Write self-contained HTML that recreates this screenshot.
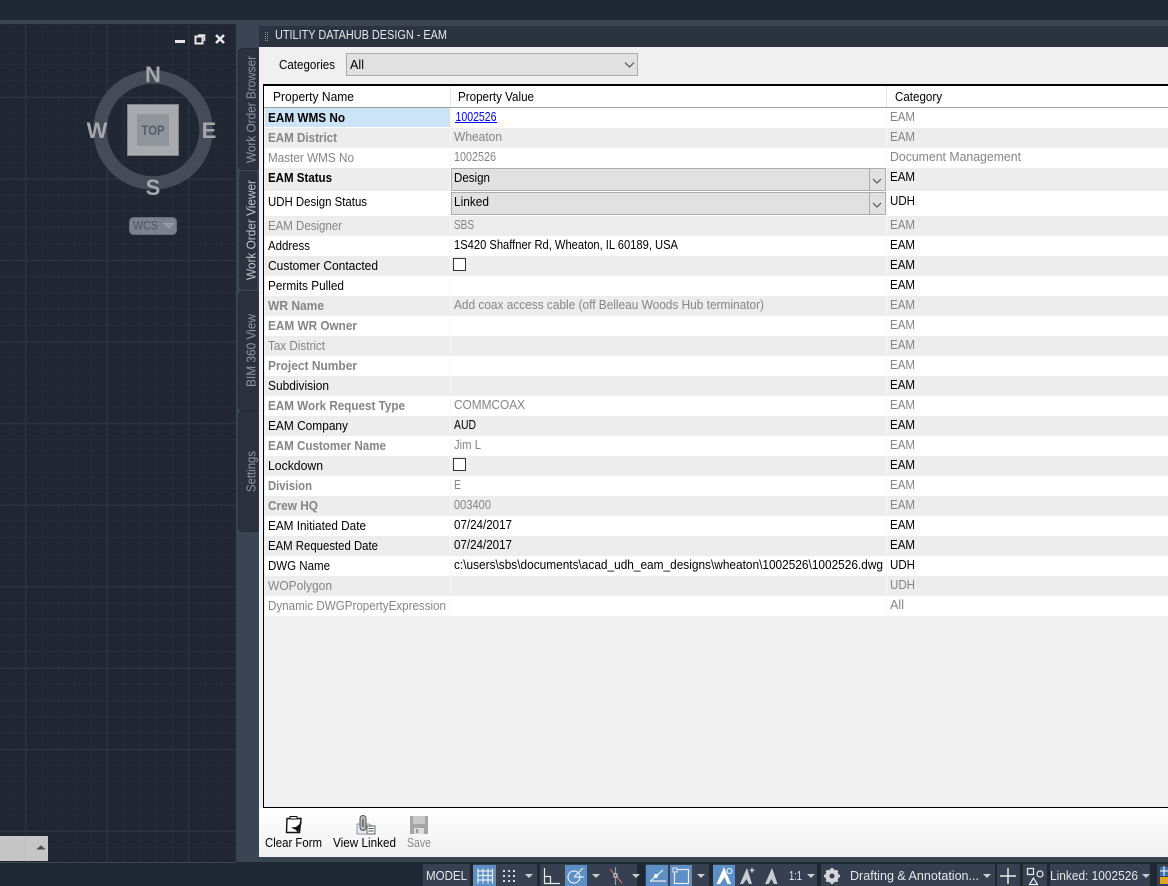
<!DOCTYPE html>
<html>
<head>
<meta charset="utf-8">
<style>
html,body{margin:0;padding:0;background:#1f2733;overflow:hidden}
svg{display:block;font-family:"Liberation Sans",sans-serif;font-size:12.5px}
.b{font-weight:bold}
.g{fill:#858585}
.k{fill:#000}
.s{fill:#e6e8eb;font-size:12.5px}
.i{fill:none;stroke:#e8eaee;stroke-width:1.2}
.t{fill:#c9ccd1}
</style>
</head>
<body>
<svg width="1168" height="886" viewBox="0 0 1168 886" xmlns="http://www.w3.org/2000/svg">
<defs>
<pattern id="minor" x="9" y="15" width="16.31" height="16.31" patternUnits="userSpaceOnUse">
<path d="M0.5 0V16.31M0 .5H16.31" stroke="#262c38" stroke-width="1" fill="none"/>
</pattern>
<pattern id="major" x="25" y="97" width="81.55" height="81.55" patternUnits="userSpaceOnUse">
<path d="M0.5 0V81.55M0 .5H81.55" stroke="#2f3543" stroke-width="1" fill="none"/>
</pattern>
<linearGradient id="tb" x1="0" y1="0" x2="0" y2="1"><stop offset="0" stop-color="#fff"/><stop offset="1" stop-color="#f0f0f0"/></linearGradient>
</defs>

<!-- top -->
<rect width="1168" height="886" fill="#1f2733"/>
<rect y="20" width="1168" height="4" fill="#3b4453"/>

<!-- viewport -->
<rect x="0" y="24" width="236" height="838" fill="#212732"/>
<rect x="0" y="24" width="236" height="838" fill="url(#minor)"/>
<rect x="0" y="24" width="236" height="838" fill="url(#major)"/>
<rect x="0" y="862" width="236" height="1" fill="#3b4453"/>
<!-- side band -->
<rect x="236" y="24" width="932" height="838" fill="#3b4453"/>

<!-- window controls -->
<rect x="175" y="40" width="10" height="3" fill="#e6e6e6"/>
<rect x="195.500" y="36.500" width="7" height="7" fill="none" stroke="#e6e6e6" stroke-width="2"/>
<path d="M198 35H204.500V41" fill="none" stroke="#e6e6e6" stroke-width="1.500"/>
<path d="M216 35L224 43M224 35L216 43" stroke="#e6e6e6" stroke-width="2.500" fill="none"/>

<!-- compass -->
<circle cx="153" cy="130" r="53" fill="none" stroke="#454b57" stroke-width="13.500"/>
<rect x="127.500" y="104.500" width="51" height="51" fill="#a9aaad" stroke="#80838a"/>
<rect x="137" y="114" width="32" height="32" fill="#90959c"/>
<text x="153" y="135" text-anchor="middle" font-weight="bold" font-size="14" fill="#565b65" textLength="23" lengthAdjust="spacingAndGlyphs">TOP</text>
<g font-weight="bold" font-size="22" fill="#a5a7ab" text-anchor="middle">
<text x="153" y="82">N</text>
<text x="97" y="138">W</text>
<text x="209" y="138">E</text>
<text x="153" y="195">S</text>
</g>
<rect x="129.500" y="217.500" width="47" height="17" rx="4" fill="#7d818e" stroke="#696d79"/>
<text x="133" y="229.500" font-size="11.500" fill="#4f535e" textLength="25" lengthAdjust="spacingAndGlyphs">WCS</text>
<path d="M164 223.500H173L168.500 228Z" fill="#8d919e" stroke="#a5a8b3" stroke-width=".8"/>

<!-- bottom-left tab -->
<rect x="0" y="836" width="48" height="25" fill="#c6c6c6"/>
<rect x="25" y="836" width="1" height="25" fill="#bdbdbd"/>
<path d="M37.500 849H44.500L41 846Z" fill="#4d4d4d" stroke="#4d4d4d"/>

<!-- side tabs -->
<g fill="#2b323e" stroke="#242a35">
<path d="M258 48.500H243Q238.500 48.500 238.500 53V165Q238.500 169.500 243 169.500H258Z"/>
<path d="M258 170.500H243Q238.500 170.500 238.500 175V286Q238.500 290.500 243 290.500H258Z" stroke="#3f4857"/>
<path d="M258 291.500H243Q238.500 291.500 238.500 296V406Q238.500 410.500 243 410.500H258Z"/>
<path d="M258 411.500H243Q238.500 411.500 238.500 416V527Q238.500 531.500 243 531.500H258Z"/>
</g>
<g font-size="12.500" fill="#8f97a2">
<text transform="translate(255.500,163) rotate(-90)" textLength="107" lengthAdjust="spacingAndGlyphs">Work Order Browser</text>
<text transform="translate(255.500,280) rotate(-90)" textLength="100" lengthAdjust="spacingAndGlyphs" fill="#c0c5cc">Work Order Viewer</text>
<text transform="translate(255.500,387) rotate(-90)" textLength="73" lengthAdjust="spacingAndGlyphs">BIM 360 View</text>
<text transform="translate(255.500,492) rotate(-90)" textLength="41" lengthAdjust="spacingAndGlyphs">Settings</text>
</g>

<!-- panel -->
<rect x="259" y="26" width="909" height="21" fill="#2c3340"/>
<g fill="#8c939e">
<rect x="265" y="32" width="1" height="1"/><rect x="267" y="32" width="1" height="1"/>
<rect x="265" y="34" width="1" height="1"/><rect x="267" y="34" width="1" height="1"/>
<rect x="265" y="36" width="1" height="1"/><rect x="267" y="36" width="1" height="1"/>
<rect x="265" y="38" width="1" height="1"/><rect x="267" y="38" width="1" height="1"/>
<rect x="265" y="40" width="1" height="1"/><rect x="267" y="40" width="1" height="1"/>
</g>
<text x="275" y="39" fill="#e6e8eb" font-size="13" textLength="172" lengthAdjust="spacingAndGlyphs">UTILITY DATAHUB DESIGN - EAM</text>
<rect x="259" y="47" width="909" height="810" fill="#f0f0f0"/>

<text x="279" y="69" class="k" textLength="56" lengthAdjust="spacingAndGlyphs">Categories</text>
<rect x="346.500" y="53.500" width="291" height="22" fill="#e1e1e1" stroke="#adadad"/>
<text x="350" y="69" class="k" textLength="14" lengthAdjust="spacingAndGlyphs">All</text>
<path d="M625 62.500L629.500 67L634 62.500" fill="none" stroke="#444" stroke-width="1"/>

<!-- grid -->
<rect x="263" y="84" width="905" height="724" fill="#000"/>
<rect x="264" y="86" width="904" height="721" fill="#f0f0f0"/>
<rect x="264" y="86" width="904" height="21" fill="#fff"/>
<rect x="264" y="107" width="904" height="1" fill="#a0a0a0"/>
<rect x="450" y="86" width="1" height="21" fill="#e5e5e5"/>
<rect x="886" y="86" width="1" height="21" fill="#e5e5e5"/>
<text x="273" y="101" class="k" textLength="81" lengthAdjust="spacingAndGlyphs">Property Name</text>
<text x="458" y="101" class="k" textLength="76" lengthAdjust="spacingAndGlyphs">Property Value</text>
<text x="895" y="101" class="k" textLength="47" lengthAdjust="spacingAndGlyphs">Category</text>

<!-- row backgrounds -->
<g fill="#fff">
<rect x="265" y="108" width="903" height="20"/>
<rect x="265" y="148" width="903" height="20"/>
<rect x="265" y="191" width="903" height="25"/>
<rect x="265" y="236" width="903" height="20"/>
<rect x="265" y="276" width="903" height="20"/>
<rect x="265" y="316" width="903" height="20"/>
<rect x="265" y="356" width="903" height="20"/>
<rect x="265" y="396" width="903" height="20"/>
<rect x="265" y="436" width="903" height="20"/>
<rect x="265" y="476" width="903" height="20"/>
<rect x="265" y="516" width="903" height="20"/>
<rect x="265" y="556" width="903" height="20"/>
<rect x="265" y="596" width="903" height="20"/>
</g>
<g fill="#ededed">
<rect x="265" y="128" width="903" height="20"/>
<rect x="265" y="168" width="903" height="23"/>
<rect x="265" y="216" width="903" height="20"/>
<rect x="265" y="256" width="903" height="20"/>
<rect x="265" y="296" width="903" height="20"/>
<rect x="265" y="336" width="903" height="20"/>
<rect x="265" y="376" width="903" height="20"/>
<rect x="265" y="416" width="903" height="20"/>
<rect x="265" y="456" width="903" height="20"/>
<rect x="265" y="496" width="903" height="20"/>
<rect x="265" y="536" width="903" height="20"/>
<rect x="265" y="576" width="903" height="20"/>
</g>
<rect x="265" y="108" width="185" height="19" fill="#cce4f7"/>
<!-- column separators -->
<rect x="450" y="108" width="1" height="508" fill="#f8f8f8"/>
<rect x="886" y="108" width="1" height="508" fill="#f8f8f8"/>

<!-- combos -->
<rect x="451.500" y="168.500" width="434" height="22" fill="#e1e1e1" stroke="#adadad"/>
<rect x="451.500" y="192.500" width="434" height="22" fill="#e1e1e1" stroke="#adadad"/>
<rect x="869" y="169" width="1" height="21" fill="#adadad"/>
<rect x="869" y="193" width="1" height="21" fill="#adadad"/>
<path d="M873 179L877 183L881 179M873 203L877 207L881 203" fill="none" stroke="#444" stroke-width="1"/>

<!-- names -->
<g>
<text x="268" y="122" class="k b" textLength="77" lengthAdjust="spacingAndGlyphs">EAM WMS No</text>
<text x="268" y="142" class="g b" textLength="69" lengthAdjust="spacingAndGlyphs">EAM District</text>
<text x="268" y="162" class="g" textLength="86" lengthAdjust="spacingAndGlyphs">Master WMS No</text>
<text x="268" y="182" class="k b" textLength="64" lengthAdjust="spacingAndGlyphs">EAM Status</text>
<text x="268" y="206" class="k" textLength="99" lengthAdjust="spacingAndGlyphs">UDH Design Status</text>
<text x="268" y="230" class="g" textLength="74" lengthAdjust="spacingAndGlyphs">EAM Designer</text>
<text x="268" y="250" class="k" textLength="42" lengthAdjust="spacingAndGlyphs">Address</text>
<text x="268" y="270" class="k" textLength="110" lengthAdjust="spacingAndGlyphs">Customer Contacted</text>
<text x="268" y="290" class="k" textLength="76" lengthAdjust="spacingAndGlyphs">Permits Pulled</text>
<text x="268" y="310" class="g b" textLength="56" lengthAdjust="spacingAndGlyphs">WR Name</text>
<text x="268" y="330" class="g b" textLength="89" lengthAdjust="spacingAndGlyphs">EAM WR Owner</text>
<text x="268" y="350" class="g" textLength="57" lengthAdjust="spacingAndGlyphs">Tax District</text>
<text x="268" y="370" class="g b" textLength="89" lengthAdjust="spacingAndGlyphs">Project Number</text>
<text x="268" y="390" class="k" textLength="61" lengthAdjust="spacingAndGlyphs">Subdivision</text>
<text x="268" y="410" class="g b" textLength="137" lengthAdjust="spacingAndGlyphs">EAM Work Request Type</text>
<text x="268" y="430" class="k" textLength="80" lengthAdjust="spacingAndGlyphs">EAM Company</text>
<text x="268" y="450" class="g b" textLength="118" lengthAdjust="spacingAndGlyphs">EAM Customer Name</text>
<text x="268" y="470" class="k" textLength="55" lengthAdjust="spacingAndGlyphs">Lockdown</text>
<text x="268" y="490" class="g b" textLength="44" lengthAdjust="spacingAndGlyphs">Division</text>
<text x="268" y="510" class="g b" textLength="50" lengthAdjust="spacingAndGlyphs">Crew HQ</text>
<text x="268" y="530" class="k" textLength="98" lengthAdjust="spacingAndGlyphs">EAM Initiated Date</text>
<text x="268" y="550" class="k" textLength="110" lengthAdjust="spacingAndGlyphs">EAM Requested Date</text>
<text x="268" y="570" class="k" textLength="62" lengthAdjust="spacingAndGlyphs">DWG Name</text>
<text x="268" y="590" class="g" textLength="64" lengthAdjust="spacingAndGlyphs">WOPolygon</text>
<text x="268" y="610" class="g" textLength="178" lengthAdjust="spacingAndGlyphs">Dynamic DWGPropertyExpression</text>
</g>

<!-- values -->
<g>
<text x="455.500" y="121" fill="#0000ff" textLength="41" lengthAdjust="spacingAndGlyphs">1002526</text>
<rect x="455" y="122" width="42" height="1" fill="#0000ff"/>
<text x="454" y="141" class="g" textLength="48" lengthAdjust="spacingAndGlyphs">Wheaton</text>
<text x="454" y="161" class="g" textLength="42" lengthAdjust="spacingAndGlyphs">1002526</text>
<text x="454" y="182" class="k" textLength="36" lengthAdjust="spacingAndGlyphs">Design</text>
<text x="454" y="206" class="k" textLength="35" lengthAdjust="spacingAndGlyphs">Linked</text>
<text x="454" y="229" class="g" textLength="20" lengthAdjust="spacingAndGlyphs">SBS</text>
<text x="454" y="249" class="k" textLength="224" lengthAdjust="spacingAndGlyphs">1S420 Shaffner Rd, Wheaton, IL 60189, USA</text>
<rect x="453.500" y="258.500" width="12" height="12" fill="#fff" stroke="#333"/>
<text x="454" y="309" class="g" textLength="310" lengthAdjust="spacingAndGlyphs">Add coax access cable (off Belleau Woods Hub terminator)</text>
<text x="454" y="409" class="g" textLength="71" lengthAdjust="spacingAndGlyphs">COMMCOAX</text>
<text x="454" y="429" class="k" textLength="22" lengthAdjust="spacingAndGlyphs">AUD</text>
<text x="454" y="449" class="g" textLength="27" lengthAdjust="spacingAndGlyphs">Jim L</text>
<rect x="453.500" y="458.500" width="12" height="12" fill="#fff" stroke="#333"/>
<text x="454" y="489" class="g" textLength="7" lengthAdjust="spacingAndGlyphs">E</text>
<text x="454" y="509" class="g" textLength="37" lengthAdjust="spacingAndGlyphs">003400</text>
<text x="454" y="529" class="k" textLength="58" lengthAdjust="spacingAndGlyphs">07/24/2017</text>
<text x="454" y="549" class="k" textLength="58" lengthAdjust="spacingAndGlyphs">07/24/2017</text>
<text x="454" y="569" class="k" textLength="429" lengthAdjust="spacingAndGlyphs">c:\users\sbs\documents\acad_udh_eam_designs\wheaton\1002526\1002526.dwg</text>
</g>

<!-- categories -->
<g>
<text x="890" y="121" class="g" textLength="25" lengthAdjust="spacingAndGlyphs">EAM</text>
<text x="890" y="141" class="g" textLength="25" lengthAdjust="spacingAndGlyphs">EAM</text>
<text x="890" y="161" class="g" textLength="131" lengthAdjust="spacingAndGlyphs">Document Management</text>
<text x="890" y="181" class="k" textLength="25" lengthAdjust="spacingAndGlyphs">EAM</text>
<text x="890" y="205" class="k" textLength="25" lengthAdjust="spacingAndGlyphs">UDH</text>
<text x="890" y="229" class="g" textLength="25" lengthAdjust="spacingAndGlyphs">EAM</text>
<text x="890" y="249" class="k" textLength="25" lengthAdjust="spacingAndGlyphs">EAM</text>
<text x="890" y="269" class="k" textLength="25" lengthAdjust="spacingAndGlyphs">EAM</text>
<text x="890" y="289" class="k" textLength="25" lengthAdjust="spacingAndGlyphs">EAM</text>
<text x="890" y="309" class="g" textLength="25" lengthAdjust="spacingAndGlyphs">EAM</text>
<text x="890" y="329" class="g" textLength="25" lengthAdjust="spacingAndGlyphs">EAM</text>
<text x="890" y="349" class="g" textLength="25" lengthAdjust="spacingAndGlyphs">EAM</text>
<text x="890" y="369" class="g" textLength="25" lengthAdjust="spacingAndGlyphs">EAM</text>
<text x="890" y="389" class="k" textLength="25" lengthAdjust="spacingAndGlyphs">EAM</text>
<text x="890" y="409" class="g" textLength="25" lengthAdjust="spacingAndGlyphs">EAM</text>
<text x="890" y="429" class="k" textLength="25" lengthAdjust="spacingAndGlyphs">EAM</text>
<text x="890" y="449" class="g" textLength="25" lengthAdjust="spacingAndGlyphs">EAM</text>
<text x="890" y="469" class="k" textLength="25" lengthAdjust="spacingAndGlyphs">EAM</text>
<text x="890" y="489" class="g" textLength="25" lengthAdjust="spacingAndGlyphs">EAM</text>
<text x="890" y="509" class="g" textLength="25" lengthAdjust="spacingAndGlyphs">EAM</text>
<text x="890" y="529" class="k" textLength="25" lengthAdjust="spacingAndGlyphs">EAM</text>
<text x="890" y="549" class="k" textLength="25" lengthAdjust="spacingAndGlyphs">EAM</text>
<text x="890" y="569" class="k" textLength="25" lengthAdjust="spacingAndGlyphs">UDH</text>
<text x="890" y="589" class="g" textLength="25" lengthAdjust="spacingAndGlyphs">UDH</text>
<text x="890" y="609" class="g" textLength="14" lengthAdjust="spacingAndGlyphs">All</text>
</g>

<!-- toolbar -->
<rect x="259" y="808" width="909" height="49" fill="url(#tb)"/>
<!-- clear form icon -->
<path d="M287 818.500H301L299.500 832.500H286.500Z" fill="#fff" stroke="#111" stroke-width="1.400"/>
<rect x="290" y="816.500" width="7" height="2.500" fill="#fff" stroke="#111" stroke-width="1"/>
<path d="M302 822L296 827L291 827.500L296 830L298 833Z" fill="#111"/>
<!-- view linked icon -->
<path d="M357 824H369L375 828V834H357Z" fill="#e9edf2" stroke="#8f979f"/>
<rect x="360" y="815.500" width="6" height="15" rx="3" fill="#b9bcc2" stroke="#555"/>
<path d="M363 819V827" stroke="#333"/>
<rect x="367" y="826" width="8" height="8" fill="#f4f6f8" stroke="#666"/>
<path d="M368.500 828.500H373.500M368.500 831H373.500" stroke="#555"/>
<!-- save icon -->
<rect x="410" y="816" width="18" height="18" fill="#a6a6a6"/>
<rect x="413" y="816" width="12" height="8" fill="#c9c9c9"/>
<rect x="414" y="828" width="10" height="6" fill="#dcdcdc"/>
<rect x="416" y="829" width="2" height="4" fill="#999"/>
<text x="265" y="847" class="k" textLength="57" lengthAdjust="spacingAndGlyphs">Clear Form</text>
<text x="333" y="847" class="k" textLength="63" lengthAdjust="spacingAndGlyphs">View Linked</text>
<text x="407" y="847" fill="#8a8a8a" textLength="24" lengthAdjust="spacingAndGlyphs">Save</text>

<!-- status bar -->
<rect x="0" y="862" width="1168" height="24" fill="#1f2733"/>
<rect x="0" y="862" width="236" height="1" fill="#3b4453"/>
<g fill="#364050">
<rect x="423" y="864" width="47" height="22"/>
<rect x="473" y="864" width="64" height="22"/>
<rect x="540" y="864" width="97" height="22"/>
<rect x="645" y="864" width="64" height="22"/>
<rect x="713" y="864" width="104" height="22"/>
<rect x="821" y="864" width="174" height="22"/>
<rect x="997" y="864" width="23" height="22"/>
<rect x="1023" y="864" width="24" height="22"/>
<rect x="1050" y="864" width="100" height="22"/>
<rect x="1157" y="864" width="11" height="22"/>
</g>
<g fill="#5b8fc5">
<rect x="473" y="865" width="23" height="21"/>
<rect x="565" y="865" width="22" height="21"/>
<rect x="646" y="865" width="22" height="21"/>
<rect x="670" y="865" width="22" height="21"/>
<rect x="713" y="865" width="22" height="21"/>
</g>
<text x="426" y="880" class="s" textLength="41" lengthAdjust="spacingAndGlyphs">MODEL</text>
<!-- grid icon -->
<path class="i" d="M478 868.500V883.500M483 868.500V883.500M488 868.500V883.500M492.500 868.500V883.500M477 871H493M477 875.500H493M477 880H493"/>
<!-- snap dots -->
<g fill="#d5d8dd">
<rect x="503" y="870" width="2" height="2"/><rect x="508" y="870" width="2" height="2"/><rect x="513" y="870" width="2" height="2"/>
<rect x="503" y="875" width="2" height="2"/><rect x="508" y="875" width="2" height="2"/><rect x="513" y="875" width="2" height="2"/>
<rect x="503" y="880" width="2" height="2"/><rect x="508" y="880" width="2" height="2"/><rect x="513" y="880" width="2" height="2"/>
</g>
<!-- ortho -->
<path class="i" d="M544.500 868V883.500H560M544.500 876.500H550.500V883.500"/>
<!-- polar -->
<circle cx="574" cy="877" r="6" class="i"/>
<path class="i" d="M574 877L583 868M574 877H584"/>
<!-- object snap track -->
<path d="M610 869L622 883" stroke="#e0666f" fill="none" stroke-width="1.200"/>
<path d="M615.500 867V885" stroke="#5fc27e" fill="none" stroke-width="1.200"/>
<rect x="614" y="874" width="3" height="3" fill="#1f2733" stroke="#e8eaee"/>
<!-- osnap angle -->
<path class="i" d="M650 881H666M650.500 881L663 870"/>
<circle cx="656" cy="876" r="2" fill="#fff"/>
<!-- box -->
<rect x="674.500" y="869.500" width="14" height="14" class="i"/>
<rect x="673" y="868" width="4" height="4" fill="#5b8fc5" stroke="#e8eaee"/>
<!-- annotation icons -->
<path d="M724 867L729 881L724.500 877L720 884H716.500Z" fill="#fff"/>
<path d="M724 867L731 884H727.500L724.500 877Z" fill="#fff"/>
<circle cx="729.500" cy="871" r="2.500" fill="none" stroke="#fff"/>
<path d="M747 868L752 884H749L746.500 879L743 884H740Z" fill="#c9ccd1"/>
<path d="M752 867L753 869.500L755.500 870L753 871L752 873.500L751 871L749 870L751 869.500Z" fill="#c9ccd1"/>
<path d="M772 868L777.500 884H774L771.500 879L768.500 884H765Z" fill="#c9ccd1"/>
<text x="789" y="880" class="s" textLength="13" lengthAdjust="spacingAndGlyphs">1:1</text>
<!-- gear -->
<circle cx="832" cy="876" r="5" fill="none" stroke="#d3d6da" stroke-width="3.500"/>
<path d="M832 868V884M824 876H840M826.500 870.500L837.500 881.500M837.500 870.500L826.500 881.500" stroke="#d3d6da" stroke-width="2.500"/>
<circle cx="832" cy="876" r="2.500" fill="#364050"/>
<text x="850" y="880" class="s" textLength="129" lengthAdjust="spacingAndGlyphs">Drafting &amp; Annotation...</text>
<path d="M1000 876H1016M1008 868V884" stroke="#e8eaee" stroke-width="1.500" fill="none"/>
<!-- shapes -->
<rect x="1027.500" y="868.500" width="6" height="6" class="i" stroke-width="1"/>
<circle cx="1040" cy="874" r="3" class="i"/>
<path class="i" d="M1033.500 878L1029.500 884.500H1037.500Z"/>
<text x="1050" y="880" class="s" textLength="88" lengthAdjust="spacingAndGlyphs">Linked: 1002526</text>
<!-- dropdown carets -->
<g fill="#c9ccd1">
<path d="M525 874H533L529 878Z"/>
<path d="M592 874H600L596 878Z"/>
<path d="M632 874H640L636 878Z"/>
<path d="M697 874H705L701 878Z"/>
<path d="M807 874H815L811 878Z"/>
<path d="M983 874H991L987 878Z"/>
<path d="M1142 874H1150L1146 878Z"/>
</g>
<!-- right icon -->
<rect x="1160" y="867" width="8" height="9" fill="#3e6fa8"/>
<path d="M1164 866V876M1160 871H1168" stroke="#fff" stroke-width="1"/>
<rect x="1160" y="877" width="8" height="7" fill="#e0a526"/>
</svg>
</body>
</html>
